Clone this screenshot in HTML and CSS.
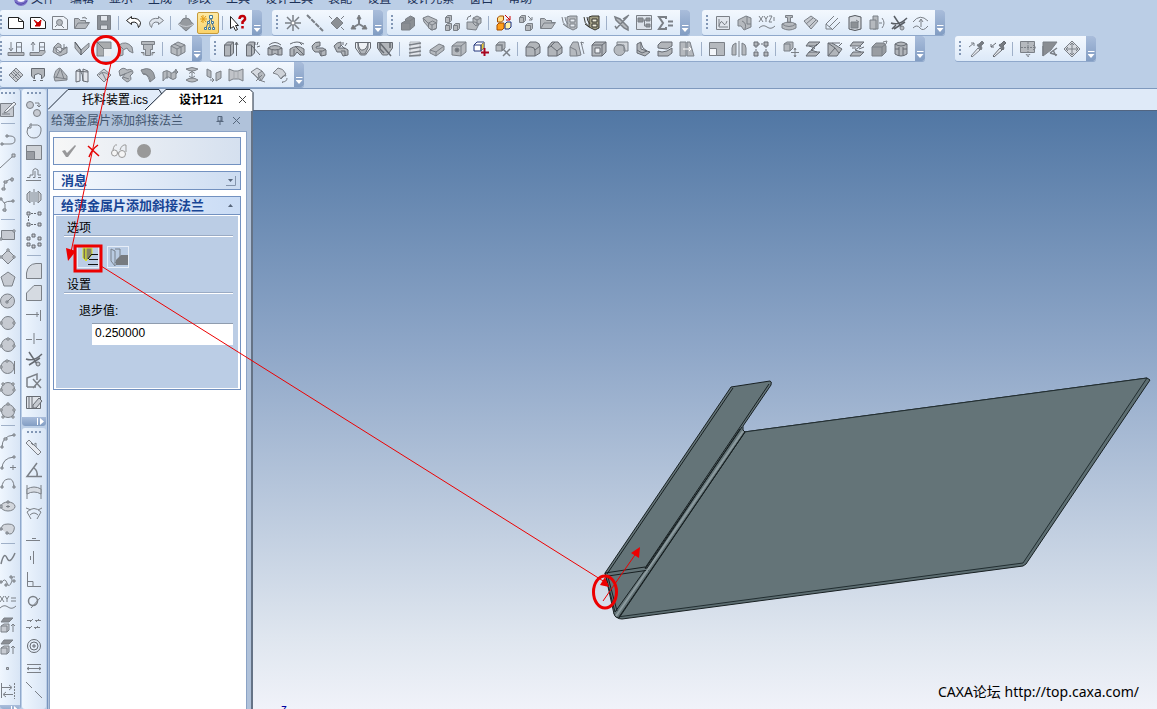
FILE: index.html
```html
<!DOCTYPE html>
<html lang="zh-CN">
<head>
<meta charset="utf-8">
<title>设计121</title>
<link rel="stylesheet" href="styles.css">
</head>
<body>
<header class="top">
<nav class="menu" aria-label="菜单">
<svg class="logo" viewBox="0 0 16 16"><circle cx="8" cy="8" r="7" fill="#7c74c8"/><ellipse cx="8" cy="8" rx="4" ry="3" fill="#f4f2ff"/><path d="M2 11q6 5 12-1" stroke="#5548ac" fill="none"/></svg>
<button>文件</button><button>编辑</button><button>显示</button><button>生成</button><button>修改</button><button>工具</button><button>设计工具</button><button>装配</button><button>设置</button><button>设计元素</button><button>窗口</button><button>帮助</button>
</nav>

<div class="row">
<div class="bar flush" role="toolbar" aria-label="标准">
<button class="tool dark" aria-label="新建"><svg viewBox="0 0 16 16"><path d="M.5 2.500h10l5 4v7H.5z" fill="#fff"/><path d="M10.500 2.500v4h5" fill="none"/></svg></button>
<button class="tool dark" aria-label="新建设计"><svg viewBox="0 0 16 16"><path d="M.5 2.500h10l5 4v7H.5z" fill="#fff"/><path d="M4 5l4 3 3-3-1 6H5l2-2z" fill="#c00" stroke="#c00"/></svg></button>
<button class="tool" aria-label="新建图纸"><svg viewBox="0 0 16 16"><path d="M.5 1.500h11l4 3v10H.5z" fill="#eef3f9"/><circle cx="7.500" cy="7.500" r="3"/><path d="M3 12l2-2M9 10l3 3"/></svg></button>
<button class="tool" aria-label="打开"><svg viewBox="0 0 16 16"><path d="M.5 13.500v-10h4l2 2h5v2h4l-4 6z"/><path d="M1 13l3-5h11M8 3q3-2 5 1"/></svg></button>
<button class="tool" aria-label="保存"><svg viewBox="0 0 16 16"><path d="M1.500.5h13v14h-13z" fill="#8b9097"/><path d="M4.500 1v5h7V1" fill="#e5e9ef"/><path d="M4.500 14v-4h7v4" fill="#d9dde3"/></svg></button>
<i class="sep"></i>
<button class="tool dark" aria-label="撤销"><svg viewBox="0 0 16 16"><path d="M5.500 1.500l-5 4 5 4v-2q6-2 7 5 2-2 2-5-2-5-9-4z" fill="#fff"/></svg></button>
<button class="tool" aria-label="重做"><svg viewBox="0 0 16 16"><path d="M10.500 1.500l5 4-5 4v-2q-6-2-7 5-2-2-2-5 2-5 9-4z" fill="#dfe5ed"/></svg></button>
<i class="sep"></i>
<button class="tool" aria-label="渲染"><svg viewBox="0 0 16 16"><path d="M8 0v3q4 0 5 4l2.500 2-3 3-4.500 4-4.500-4-3-3L3 7q1-4 5-4" fill="#969a9f"/><path d="M.5 9q8 5 15 0" fill="none" stroke="#c8ccd2"/></svg></button>
<button class="tool active" aria-label="设计树"><svg viewBox="0 0 16 16"><path d="M3 0v8M0 4h7M1 1l5 6M6 1L1 7" stroke="#e39b13"/><path d="M11 3L8 8l-2 5M11 3l1 5 2 5M10 9v4" stroke="#557087" fill="none"/><path d="M9.500.5h3v3h-3zM7.500 6.500h2v2h-2zM11.500 6.500h2v2h-2zM4.500 12.500h2v2h-2zM8.500 12.500h2v2h-2zM12.500 12.500h2v2h-2z" fill="#e9fdff" stroke="#44799b"/></svg></button>
<i class="sep"></i>
<button class="tool dark" aria-label="帮助指针"><svg viewBox="0 0 16 16"><path d="M.5 1.500v12l3-2 2 4 2-1-2-4h3z" fill="#fff"/><path d="M9.500 4q0-3 3-3t2.500 3.500L12.500 7v2M12.500 11v2.500" fill="none" stroke="#c00009" stroke-width="2.500"/></svg></button>
<button class="cap" aria-label="工具栏选项"></button>
</div>
<div class="bar gap-10" role="toolbar" aria-label="基准">
<button class="tool" aria-label="点"><svg viewBox="0 0 16 16"><path d="M8 0v16M0 8h16M2 2l12 12M14 2L2 14" fill="none" stroke-width="1.500"/><circle cx="8" cy="8" r="2" fill="#fff"/></svg></button>
<button class="tool" aria-label="基准轴"><svg viewBox="0 0 16 16"><path d="M0 0l16 16" stroke-dasharray="5 1" stroke-width="2"/></svg></button>
<button class="tool" aria-label="基准面"><svg viewBox="0 0 16 16"><path d="M8 2l6 6-6 6-6-6z" fill="#8b8f94"/><path d="M0 1l3 3M12 4l3-3M12 12l3 3"/></svg></button>
<button class="tool" aria-label="坐标系"><svg viewBox="0 0 16 16"><path d="M8 2v7l-5 3M8 9l5 3" fill="none" stroke-width="2"/><path d="M6 4l2-4 2 4zM0 14l2-4 3 4zM16 14l-2-4-3 4z" fill="#777"/></svg></button>
<button class="cap" aria-label="工具栏选项"></button>
</div>
<div class="bar gap-4" role="toolbar" aria-label="装配">
<button class="tool" aria-label="零件"><svg viewBox="0 0 16 16"><path d="M1.500 8l4-2V4l5-3 4 2v8l-5 4h-8z" fill="#8b8f94"/><path d="M5 6h5l4-3M2 8h8v7" fill="none"/></svg></button>
<button class="tool" aria-label="组件"><svg viewBox="0 0 16 16"><path d="M1 3l5-2 9 4-1 9-5 1-7-8z"/><path d="M6.500 8l4-2 4 2v5l-4 2-4-2zM6 8l4 2 4-2M10 10v5M1 3l5 5"/></svg></button>
<button class="tool" aria-label="装配体"><svg viewBox="0 0 16 16"><path d="M1.500 2.500l2-2h4v5l-2 2h-4zM1.500 10.500l2-2h4v5l-2 2h-4zM9.500 10.500l2-2h4v5l-2 2h-4z"/><path d="M1.500 2.500h4v5M1.500 10.500h4v5M9.500 10.500h4v5" fill="none"/></svg></button>
<button class="tool" aria-label="插入零件"><svg viewBox="0 0 16 16"><path d="M1 14V7h8l4 2-3 6zM7 3l4-2 4 2v5l-5 3-3-3z"/><path d="M1 5q0-4 4-4L4 0M7 3l4 2 4-2M11 5v5" fill="none"/></svg></button>
<i class="sep"></i>
<button class="tool" aria-label="装配列表"><svg viewBox="0 0 16 16"><path d="M1.500 3l2-2h4v4l-2 2h-4z" fill="#ffe087" stroke="#a34c00"/><path d="M1 10l2-2h5v5l-2 2H1z" fill="#ff9e1b" stroke="#a34c00"/><path d="M9 9l2-2h4v5l-2 2H9z" fill="#fff0a6" stroke="#122b83"/><path d="M9 0l5 5M14 1v4h-4" fill="none" stroke="#c00"/></svg></button>
<button class="tool" aria-label="解除装配"><svg viewBox="0 0 16 16"><path d="M1.500 2.500l2-2h4v5l-2 2h-4zM7.500 10.500l2-2h5v5l-2 2h-5z"/><path d="M1.500 2.500h4v5M7.500 10.500h5v5M10 1l4 4M14 2v3h-3" fill="none"/></svg></button>
<button class="tool" aria-label="导入"><svg viewBox="0 0 16 16"><path d="M.5 13.500v-10h4l2 2h5v2h4l-4 6z"/><path d="M1 13l3-5h11"/></svg></button>
<button class="tool" aria-label="链接"><svg viewBox="0 0 16 16"><path d="M5 2l3-1h7v12l-4 2-6-3z"/><path d="M8 4h5v3H8zM8 9h5v3H8z" fill="#e8ecf2"/><path d="M0 2q0 6 5 10L1 9M3 2q0 4 3 7" fill="none"/></svg></button>
<button class="tool olive" aria-label="保存链接"><svg viewBox="0 0 16 16"><path d="M5 2l3-1h7v12l-4 2-6-3z"/><path d="M8 4h5v3H8zM8 9h5v3H8z" fill="#f0eedc"/><path d="M0 2q0 6 5 10L1 9M3 2q0 4 3 7" fill="none"/></svg></button>
<i class="sep"></i>
<button class="tool" aria-label="约束"><svg viewBox="0 0 16 16"><path d="M1 2l5 2 8 8v3l-4-2-8-8zM14 1L2 14M9 4l6-4M3 14l-2-3" stroke-width="1.500"/></svg></button>
<button class="tool" aria-label="设计关系"><svg viewBox="0 0 16 16"><path d="M.5.5h15v14H.5z" fill="#dce2ea"/><path d="M2 3h5v4H2zM10 3h4v3h-4zM10 9h4v3h-4z" fill="#8c9095"/><path d="M7 5h3M8.500 5v6H10" fill="none"/></svg></button>
<button class="tool" aria-label="统计"><svg viewBox="0 0 16 16"><path d="M8 4V2H1l4 6-4 6h7v-2M10 6.500h5M10 10.500h5" fill="none" stroke-width="2"/></svg></button>
<button class="cap" aria-label="工具栏选项"></button>
</div>
<div class="bar gap-12" role="toolbar" aria-label="曲面">
<button class="tool" aria-label="草图曲线"><svg viewBox="0 0 16 16"><path d="M1.500 1.500h13v13h-13z" fill="#e2e7ee"/><path d="M4 4v8h9M4 11q2-7 4-3t4-2" fill="none"/></svg></button>
<button class="tool" aria-label="投影曲线"><svg viewBox="0 0 16 16"><path d="M1 5l8-4 5 2v9l-7 3-3-4H1z"/><path d="M5 6q5 2 3 8M10 1v8h4" fill="none"/></svg></button>
<button class="tool" aria-label="公式曲线"><svg viewBox="0 0 16 16"><path d="M0 1l4 6M4 1L0 7M5 1l2 3 2-3M7 4v3M10 1h3l-3 6h3M14 3h2M14 5h2M0 13q4-4 8-1t8-1" fill="none"/></svg></button>
<button class="tool" aria-label="放样"><svg viewBox="0 0 16 16"><path d="M4.500.5h7v2h-2v5h-3v-5h-2zM1 9q7-4 14 0v4q-7 4-14 0z"/><path d="M1 9q7 5 14 0" fill="none"/></svg></button>
<button class="tool" aria-label="曲面"><svg viewBox="0 0 16 16"><path d="M1 6l7-5 7 5-7 8z" fill="#c6cad0"/><path d="M3 9l7-6M6 12l7-7" fill="none"/></svg></button>
<button class="tool" aria-label="等距"><svg viewBox="0 0 16 16"><path d="M1 14V9l8-8M4 12l9-9M7 15l8-8M1 14h6M1 9l6 5" fill="none"/></svg></button>
<button class="tool" aria-label="圆柱面"><svg viewBox="0 0 16 16"><path d="M2 2q6-3 12 0v12q-6 3-12 0z" fill="#d2d6dc" stroke="#55595f"/><path d="M4 7h7v6H4z" fill="#8c9095"/><path d="M9 5l3 2" fill="none"/></svg></button>
<button class="tool" aria-label="延伸"><svg viewBox="0 0 16 16"><path d="M4 1h5v13H4z"/><path d="M1 5h6v9H1z"/><path d="M10 8h3M13 3q4 5 0 10" fill="none"/></svg></button>
<button class="tool" aria-label="裁剪"><svg viewBox="0 0 16 16"><path d="M3 1l8 12M0 8q8 3 16-5M3 14L14 7M5 10l-4 4" fill="none" stroke="#585d64" stroke-width="1.500"/><circle cx="11" cy="13" r="2"/></svg></button>
<button class="tool" aria-label="提升曲线"><svg viewBox="0 0 16 16"><path d="M0 7q7-9 15-1M0 13q4-4 7 0t8-2M8 12V5M6 7l2-3 2 3" fill="none"/></svg></button>
<button class="cap" aria-label="工具栏选项"></button>
</div>
</div>

<div class="row">
<div class="bar flush" role="toolbar" aria-label="钣金">
<button class="tool" aria-label="向下折弯"><svg viewBox="0 0 16 16"><path d="M3 1v8M1 7l2 3 2-3M8.500 11V1.500h5V11M8.500 6h5" fill="none"/><path d="M0 11.500h16v3H0z"/></svg></button>
<button class="tool" aria-label="向上折弯"><svg viewBox="0 0 16 16"><path d="M3 10V1M1 4l2-3 2 3M9.500 11V1.500h5V11M9.500 6h5" fill="none"/><path d="M0 11.500h9l1-2h5v2l-3 3H0z"/></svg></button>
<button class="tool" aria-label="板料"><svg viewBox="0 0 16 16"><path d="M2 6l4-4 3 2v4l6-2v6l-7 3-7-4z"/><circle cx="7" cy="9" r="3" fill="#e0e4eb"/><path d="M2 6l6 5 7-5M12 3v5" fill="none"/></svg></button>
<button class="tool" aria-label="折弯板"><svg viewBox="0 0 16 16"><path d="M1 1v6l6 7 8-8V2L7 9z"/><path d="M7 9v5M1 1l6 8" fill="none" stroke="#4f545a"/></svg></button>
<button class="tool" aria-label="斜接法兰"><svg viewBox="0 0 16 16"><path d="M1 1h14v7H8v7H1z" fill="#a9acae"/><path d="M1 1l7 7" stroke="#6d7479"/><path d="M8 8h7v7H8z" fill="#edf0f4" stroke="none"/></svg></button>
<button class="tool" aria-label="弯边"><svg viewBox="0 0 16 16"><path d="M1 4q7-5 13 2l1 6-4-2-2-3-4 2v5l-3 1z"/><path d="M5 8q-3-3-4-4" fill="none"/></svg></button>
<button class="tool" aria-label="冲压"><svg viewBox="0 0 16 16"><path d="M1.500.5h13v3h-13z"/><path d="M3.500 3.500h9v5h-2v6h-5v-6h-2zM1 11.500h3v3M15 11.500h-3v3"/></svg></button>
<i class="sep"></i>
<button class="tool" aria-label="钣金零件"><svg viewBox="0 0 16 16"><path d="M1 5l7-4 7 3v7l-7 4-7-3z"/><path d="M1 5l6 3 8-4M7 8v7M4 3l7 3v7" fill="none"/></svg></button>
<button class="cap" aria-label="工具栏选项"></button>
</div>
<div class="bar gap-8" role="toolbar" aria-label="特征">
<button class="tool deep" aria-label="拉伸"><svg viewBox="0 0 16 16"><path d="M1.500 4l3-3h6v11l-3 3h-6z"/><path d="M1.500 4h6v11M7.500 4l3-3M13.500 15V2M12 4l1.500-3L15 4" fill="none"/></svg></button>
<button class="tool deep" aria-label="拉伸向导"><svg viewBox="0 0 16 16"><path d="M1.500 4l3-3h5v11l-3 3h-5z"/><path d="M1.500 4h5v11M7 5l8 9M10 1v3M13 1l-1 3M15 5l-3 1" fill="none"/></svg></button>
<button class="tool deep" aria-label="旋转"><svg viewBox="0 0 16 16"><path d="M1 7q7-5 14 0v7h-4q-3-3-6 0H1z"/><path d="M1 7q7 4 14 0M5 9v5M11 9v5M2 4q6-5 12 0" fill="none"/></svg></button>
<button class="tool deep" aria-label="旋转向导"><svg viewBox="0 0 16 16"><path d="M1 8q7-5 14 0v6h-4l-3-3-3 4H1z"/><path d="M1 3q7-4 14 0M6 5l9 9M5 8v6M10 1l3 3" fill="none"/></svg></button>
<button class="tool deep" aria-label="扫描"><svg viewBox="0 0 16 16"><path d="M1 5q3-5 8-4v4q-5 0-4 2h7l3 2v5l-5 1-2-4H4q-3-2-3-6z"/><path d="M8 10h4l3-2M10 10v5" fill="none"/></svg></button>
<button class="tool deep" aria-label="扫描向导"><svg viewBox="0 0 16 16"><path d="M1 5q3-4 7-4v4L5 7h7l3 2v5l-5 1-2-4H4z"/><path d="M8 4l4 4M10 1v3M14 2l-2 3M8 10h4v5" fill="none"/></svg></button>
<button class="tool deep" aria-label="放样特征"><svg viewBox="0 0 16 16"><path d="M.5 1.500h15V7l-5 7h-5L.5 7z" fill="#eef1f5"/><path d="M3 2q1 8 5 7t5-7v5l-3 6H6L3 7z"/></svg></button>
<button class="tool deep" aria-label="放样向导"><svg viewBox="0 0 16 16"><path d="M.5 1.500h15V7l-5 7h-5L.5 7z"/><path d="M3 2l11 13M3 2v6l4 4M13 2v5" fill="none" stroke-width="1.500"/></svg></button>
<i class="sep"></i>
<button class="tool" aria-label="螺纹"><svg viewBox="0 0 16 16"><path d="M3 1h10v14H3z" fill="#e3e6eb" stroke="#b0b5bc"/><path d="M2 4l12-2M2 8l12-2M2 12l12-2M2 15l12-1" stroke-width="1.500"/></svg></button>
<button class="tool" aria-label="加厚"><svg viewBox="0 0 16 16"><path d="M1 9l9-6 5 2v4l-8 6-6-3z"/><path d="M1 9l6 2 8-6M7 11v4" fill="none"/></svg></button>
<button class="tool" aria-label="自定义孔"><svg viewBox="0 0 16 16"><path d="M1 5l5-4h9v10l-5 4-9-1z"/><path d="M1 5h9v10M10 5l5-4" fill="none"/><circle cx="6" cy="9" r="2" fill="#6f747a"/></svg></button>
<button class="tool" aria-label="添加"><svg viewBox="0 0 16 16"><path d="M1 4l3-3h7v6l-3 3H1z" fill="#fff" stroke="#25377c"/><path d="M8 4l3-3v6L8 10z" fill="#e9c736"/><path d="M1 4h7v6" fill="none" stroke="#25377c"/><path d="M11.500 7v8M8 11.500h8" stroke="#a80620" stroke-width="2"/></svg></button>
<button class="tool" aria-label="删除体"><svg viewBox="0 0 16 16"><path d="M1 4l3-3h6v6l-3 3H1z"/><path d="M1 4h6v6M8 8l7 7M15 8l-7 7" fill="none" stroke-width="1.500"/></svg></button>
<i class="sep"></i>
<button class="tool deep" aria-label="圆角"><svg viewBox="0 0 16 16"><path d="M1 6l4-5h6q4 1 4 5v6l-5 3H1z"/><path d="M1 6h5q4 0 4 4v5M10 9l5-4" fill="none"/></svg></button>
<button class="tool deep" aria-label="倒角"><svg viewBox="0 0 16 16"><path d="M1 6l4-5h6l4 5v6l-5 3H1z"/><path d="M1 7l3-2 6 5v5M4 5l4-4M10 10l5-4" fill="none"/></svg></button>
<button class="tool" aria-label="拔模"><svg viewBox="0 0 16 16"><path d="M1 6l3-5h5l3 13-4 1H1z"/><path d="M1 6l6 3 1 6M12 1l3 12M13 4l-1-3 3 1" fill="none"/></svg></button>
<button class="tool deep" aria-label="抽壳"><svg viewBox="0 0 16 16"><path d="M1 4l3-3h11v10l-4 4H1z"/><path d="M1 4h10v11M11 4l4-3" fill="none"/><path d="M4 7h5v5H4z" fill="#eef1f5"/></svg></button>
<button class="tool" aria-label="布尔"><svg viewBox="0 0 16 16"><path d="M4 1h11v9H4z" fill="#d0d4d9"/><circle cx="6.500" cy="9" r="5.500"/><path d="M4 4h7v6" fill="none"/></svg></button>
<button class="tool deep" aria-label="筋板"><svg viewBox="0 0 16 16"><path d="M2 3l4-2v7l9 3-5 4-8-3z"/><path d="M6 2q1 6 6 8l-5 2-5-3" fill="none"/></svg></button>
<button class="tool deep" aria-label="分割"><svg viewBox="0 0 16 16"><path d="M1 4l3-3h11v4l-5 3-9-1zM1 10l4 1 5-1 5-3v5l-4 3H1z"/></svg></button>
<button class="tool" aria-label="截面"><svg viewBox="0 0 16 16"><path d="M1 1h6v14H1zM8 1h3l4 14H8z"/><path d="M4 8h8M10 6l2 2-2 2" fill="none" stroke="#fff"/></svg></button>
<i class="sep"></i>
<button class="tool" aria-label="缩放"><svg viewBox="0 0 16 16"><path d="M.5 1.500h15v13H.5z"/><path d="M.5 7.500h7v7h-7z" fill="#f3f6fa"/></svg></button>
<button class="tool" aria-label="镜像"><svg viewBox="0 0 16 16"><path d="M1 7q0-4 4-5v12H1zM15 7q0-4-4-5v12h4z"/><path d="M8 0v16"/></svg></button>
<button class="tool deep" aria-label="阵列"><svg viewBox="0 0 16 16"><path d="M1 1h4v4H1zM11 1h4v4h-4zM1 11h4v4H1zM11 11h4v4h-4z"/><path d="M5 3h6M3 5v6M13 5v6" stroke-dasharray="2 1" fill="none"/></svg></button>
<i class="sep"></i>
<button class="tool" aria-label="移动面"><svg viewBox="0 0 16 16"><path d="M1 3l3-2h6v6l-3 3H1z"/><path d="M1 3h6v7M12 7v9M8 11.500h8M11 9l1-2 1 2M11 14l1 2 1-2" fill="none"/></svg></button>
<button class="tool deep" aria-label="匹配面"><svg viewBox="0 0 16 16"><path d="M4 1h11l-4 4H1zM4 11h11l-4 4H1z"/><path d="M4 5l6 2-6 4M12 3L6 9l6 2" fill="none"/></svg></button>
<button class="tool deep" aria-label="偏移面"><svg viewBox="0 0 16 16"><path d="M1 2h4l10 6-5 7H1z"/><path d="M1 2l7 5-7 8M5 2h8M8 7l4 5M12 5l3-3" fill="none"/></svg></button>
<button class="tool deep" aria-label="替换面"><svg viewBox="0 0 16 16"><path d="M4 1h11l-4 4H1zM4 11h11l-4 4H1z"/><path d="M12 5L6 9l6 2M3 7h4M10 8l5-2" fill="none"/></svg></button>
<button class="tool" aria-label="编辑面"><svg viewBox="0 0 16 16"><path d="M1 6l4-4h8l2 3v6l-4 4H1z" fill="#999da2"/><path d="M1 6h10v9M11 6l4-3M12 1l4-1-1 3" fill="none"/></svg></button>
<button class="tool deep" aria-label="柱面"><svg viewBox="0 0 16 16"><path d="M2 3q6-4 12 0v10q-6 4-12 0z"/><path d="M2 3q6 4 12 0M6 6v9M10 6v8M2 8h4M10 8h4" fill="none"/></svg></button>
<button class="cap" aria-label="工具栏选项"></button>
</div>
<div class="bar gap-30" role="toolbar" aria-label="拾取">
<button class="tool" aria-label="提取属性"><svg viewBox="0 0 16 16"><path d="M3 15l7-8 2 2-8 7z" fill="#e4e8ee"/><path d="M9 4l4 5 1-2-1-2 3-3-2-2-3 3z" fill="#777c82"/><path d="M1 6l5-4M3 2h3v3" fill="none"/></svg></button>
<button class="tool deep" aria-label="应用属性"><svg viewBox="0 0 16 16"><path d="M3 15l7-8 2 2-8 7z" fill="#e4e8ee"/><path d="M9 4l4 5 1-2-1-2 3-3-2-2-3 3z" fill="#777c82"/><path d="M6 2L1 6M1 3v3h3" fill="none"/></svg></button>
<i class="sep"></i>
<button class="tool" aria-label="移动贴图"><svg viewBox="0 0 16 16"><path d="M.5.500h14v11H.5z"/><path d="M8 1v14M1 6.500h14M6 13l2 3 2-3M13 4l3 2.500-3 2.500" fill="none" stroke-dasharray="2 1"/></svg></button>
<button class="tool" aria-label="移动凸痕"><svg viewBox="0 0 16 16"><path d="M1 1h14L9 9l-8 6z" fill="#898d92"/><path d="M1 15V5M8 12l7-5M11 9l3 6M8 12l7 2" fill="none" stroke-width="1.500"/></svg></button>
<button class="tool" aria-label="移动纹理"><svg viewBox="0 0 16 16"><path d="M8 0l8 8-8 8-8-8z" fill="#d6dae0"/><path d="M8 2v12M2 8h12M6 4l2-2 2 2M6 12l2 2 2-2M4 6L2 8l2 2M12 6l2 2-2 2" fill="none"/></svg></button>
<button class="cap" aria-label="工具栏选项"></button>
</div>
</div>

<div class="row">
<div class="bar flush" role="toolbar" aria-label="曲面编辑">
<button class="tool" aria-label="网格面"><svg viewBox="0 0 16 16"><path d="M8 1l7 7-7 7-7-7z" fill="#c6cad0"/><path d="M4 4l8 8M6 3l7 7M3 6l7 7M12 4l-8 8" fill="none"/></svg></button>
<button class="tool deep" aria-label="放样面"><svg viewBox="0 0 16 16"><path d="M1.500 1.500h13V9l-3 3V8q-3-3-7 0v4l-3-3z"/><path d="M3 13.500h3M10 13.500h3" fill="none"/></svg></button>
<button class="tool" aria-label="直纹面"><svg viewBox="0 0 16 16"><path d="M2 10q1-8 6-9l7 8v4l-12 1z"/><path d="M2 10l13 2M8 2L4 11M9 3l3 9" fill="none"/></svg></button>
<button class="tool deep" aria-label="拉伸面"><svg viewBox="0 0 16 16"><path d="M2 4l4-2v12l-4 1zM9 2l5 2v11l-5-1z" fill="#e3e7ed"/><path d="M6 3q3 4 3 11M2 4l12 1" fill="none"/></svg></button>
<button class="tool" aria-label="旋转面"><svg viewBox="0 0 16 16"><path d="M1 8l7-6 7 6-7 7z" fill="#ced2d8"/><path d="M3 8q4-5 10 0M6 5l4 8" fill="none"/></svg></button>
<button class="tool" aria-label="导动面"><svg viewBox="0 0 16 16"><path d="M1 4q4-5 8-1 6-2 6 3l-3 3q3 4-3 6l-5-4 3-4-5 2z"/><path d="M2 9q9-4 12-5M5 10l6 2" fill="none"/></svg></button>
<button class="tool" aria-label="弯曲面"><svg viewBox="0 0 16 16"><path d="M1 3q12-5 14 8l-5 4q1-7-7-8z" fill="#9b9fa4"/><path d="M3 7q4-2 7 8" fill="none"/></svg></button>
<button class="tool" aria-label="延伸面"><svg viewBox="0 0 16 16"><path d="M1 5q4-3 7 0t6-3v9q-3 3-6 0t-7 3z"/><path d="M5 4v8M9 6v6M11 5h5M14 3l2 2-2 2" fill="none"/></svg></button>
<button class="tool" aria-label="偏移曲面"><svg viewBox="0 0 16 16"><path d="M2 2q6-3 12 0-6 4-12 0M2 13q6-4 12 0-6 4-12 0"/><path d="M8 4v7M5 6.500l3-2 3 2M5 9l3 2 3-2" fill="none"/></svg></button>
<button class="tool" aria-label="复制面"><svg viewBox="0 0 16 16"><path d="M1 2l4 2v7l-4-2zM10 6l5-2v7l-5 3z"/><path d="M4 13h4M6 11l2 2-2 2" fill="none"/></svg></button>
<button class="tool" aria-label="缝合面"><svg viewBox="0 0 16 16"><path d="M1 2l5 2h4l5-2v12l-4-2H5l-4 2z" fill="#c1c4c9"/><path d="M6 4v8M10 4v8" fill="none" stroke="#a5a9ae"/></svg></button>
<button class="tool" aria-label="裁剪面"><svg viewBox="0 0 16 16"><path d="M1 5l6-4 5 3-4 7z" fill="#d6dae0"/><path d="M8 7l4-3 3 4-4 6z"/><path d="M3 6l7 8M12 8l-6 6M9 13l6 2" fill="none"/></svg></button>
<button class="tool" aria-label="还原面"><svg viewBox="0 0 16 16"><path d="M1 6l5-5q5 0 8 6l-5 5Q6 6 1 6z" fill="#ced2d8"/><path d="M9 12q1-4 5-3l-1-2M15 11q0 4-5 4l1 1" fill="none"/></svg></button>
<button class="cap" aria-label="工具栏选项"></button>
</div>
</div>
</header>

<main class="work">
<div class="side first" role="toolbar" aria-label="草图绘制">
<button class="tool" aria-label="草图"><svg viewBox="0 0 16 16"><path d="M.5 2.500h13v13H.5z"/><path d="M5 10l9-9 2 2-9 8-3 1zM2 13h8" fill="#eef2f7"/></svg></button>
<i class="sep"></i>
<button class="tool" aria-label="连续直线"><svg viewBox="0 0 16 16"><path d="M2 13h8q5 0 5-4t-5-4H8" fill="none"/><path d="M1 12h2v2H1zM6 4h2v2H6z"/></svg></button>
<button class="tool" aria-label="两点线"><svg viewBox="0 0 16 16"><path d="M0 15L13 3"/><path d="M12 1h3v3h-3z"/></svg></button>
<button class="tool" aria-label="切线弧"><svg viewBox="0 0 16 16"><path d="M4 14Q3 4 14 4" fill="none"/><path d="M2 13h3v2H2zM4 6h3v2H4zM11 3h2v3h-2z"/></svg></button>
<button class="tool" aria-label="法线弧"><svg viewBox="0 0 16 16"><path d="M1 2l4 5q0 6 0 8M4 6q2-2 10-2" fill="none"/><path d="M0 1h2v2H0zM3 12h3v2H3zM12 3h2v2h-2z"/></svg></button>
<i class="sep"></i>
<button class="tool" aria-label="矩形"><svg viewBox="0 0 16 16"><path d="M1.500 3.500h13v9h-13z"/><path d="M0 11h2v2H0zM13 3h2v2h-2z" fill="#eef2f7"/></svg></button>
<button class="tool" aria-label="三点矩形"><svg viewBox="0 0 16 16"><path d="M8 1l7 7-7 7-7-7z"/><path d="M7 0h2v2H7zM0 7h2v2H0zM13 7h2v2h-2z" fill="#eef2f7"/></svg></button>
<button class="tool" aria-label="多边形"><svg viewBox="0 0 16 16"><path d="M8 1l7 5-3 9H4L1 6z"/></svg></button>
<button class="tool" aria-label="圆心半径"><svg viewBox="0 0 16 16"><circle cx="7.500" cy="8" r="7"/><path d="M7 9l5-5M6 8h2v2H6z"/></svg></button>
<button class="tool" aria-label="两点圆"><svg viewBox="0 0 16 16"><circle cx="8" cy="8" r="6.500"/><path d="M0 7h2v2H0zM13 7h2v2h-2z" fill="#eee"/></svg></button>
<button class="tool" aria-label="三点圆"><svg viewBox="0 0 16 16"><circle cx="8" cy="8" r="6.500"/><path d="M7 1h2v2H7zM0 8h2v2H0zM13 8h2v2h-2z" fill="#eee"/></svg></button>
<button class="tool" aria-label="切点圆"><svg viewBox="0 0 16 16"><circle cx="7.500" cy="8" r="6.500"/><path d="M14.500 2v13M6 1h2v2H6zM0 7h2v2H0z" fill="#eee"/></svg></button>
<button class="tool" aria-label="双切圆"><svg viewBox="0 0 16 16"><circle cx="8" cy="8" r="6.500"/><path d="M2 2h2v2H2zM12 2h2v2h-2zM0 8h2v2H0zM13 8h2v2h-2z" fill="#eee"/></svg></button>
<button class="tool" aria-label="三切圆"><svg viewBox="0 0 16 16"><circle cx="8" cy="8" r="6.500"/><path d="M7 0h2v2H7zM2 13h2v2H2zM12 13h2v2h-2zM0 6h2v2H0zM13 6h2v2h-2z" fill="#eee"/></svg></button>
<i class="sep"></i>
<button class="tool" aria-label="圆弧"><svg viewBox="0 0 16 16"><path d="M2 14Q2 3 14 2" fill="none"/><path d="M1 13h2v2H1zM4 5h3v2H4zM13 1h2v2h-2z"/></svg></button>
<button class="tool" aria-label="圆心圆弧"><svg viewBox="0 0 16 16"><path d="M2 14Q2 3 14 2M13 10v5M10 12.500h6" fill="none"/><path d="M1 12h2v2H1zM13 1h2v2h-2z"/></svg></button>
<button class="tool" aria-label="端点圆弧"><svg viewBox="0 0 16 16"><path d="M2 11Q2 3 8 2t6 9" fill="none"/><path d="M1 9h2v2H1zM13 9h2v2h-2z"/></svg></button>
<button class="tool" aria-label="椭圆"><svg viewBox="0 0 16 16"><ellipse cx="8" cy="7.500" rx="7" ry="4.500" fill="#d2d6dc"/><path d="M8 6v3M6 7.500h4M0 6h2v3H0zM7 2h2v2H7z"/></svg></button>
<button class="tool" aria-label="椭圆弧"><svg viewBox="0 0 16 16"><path d="M2 9Q0 3 8 3t6 6-7 3" fill="#d2d6dc"/><path d="M0 7h2v2H0zM6 11h2v2H6z"/></svg></button>
<i class="sep"></i>
<button class="tool" aria-label="样条"><svg viewBox="0 0 16 16"><path d="M1 13Q4 0 7 7t8-5" fill="none" stroke-width="1.500"/></svg></button>
<button class="tool" aria-label="贝塞尔"><svg viewBox="0 0 16 16"><path d="M1 10q4-6 6 0t5-2q-1-5 3-4" fill="none"/><path d="M0 8h2v2H0zM5 11h2v2H5zM10 3h2v2h-2zM13 7h2v2h-2z"/></svg></button>
<button class="tool" aria-label="方程曲线"><svg viewBox="0 0 16 16"><path d="M0 1l4 6M4 1L0 7M5 1l2 3 2-3M7 4v3M11 3h5M11 6h5M0 13q4-4 8-1t8-1" fill="none"/></svg></button>
<button class="tool" aria-label="投影"><svg viewBox="0 0 16 16"><path d="M4 1h9l-4 4H1z" fill="#8b8f95"/><path d="M1 9l3-2h5v6l-2 2H1z"/><path d="M1 9h6v6M13 15V7M11 9l2-2 2 2" fill="none"/></svg></button>
<button class="tool" aria-label="投影约束"><svg viewBox="0 0 16 16"><path d="M4 1h9l-4 4H1z" fill="#8b8f95"/><path d="M1 9l3-2h5v6l-2 2H1z"/><path d="M1 9h6v6M13 15V7M11 9l2-2 2 2" fill="none"/></svg></button>
<button class="tool" aria-label="点工具"><svg viewBox="0 0 16 16"><path d="M6.500 6.500h2v2h-2z"/></svg></button>
<button class="tool" aria-label="宽度"><svg viewBox="0 0 16 16"><path d="M1.500 0v15M2 4.500h9M9 2l3 2.500L9 7M13 11.500H4M6 9l-3 2.500L6 14" fill="none"/><path d="M14.500 0v16" stroke-dasharray="2 1"/></svg></button>
<button class="cap" aria-label="工具栏选项"></button>
</div>
<div class="side-pair">
<div class="side" role="toolbar" aria-label="草图编辑">
<button class="tool" aria-label="移动"><svg viewBox="0 0 16 16"><circle cx="4" cy="4" r="3.500"/><circle cx="11" cy="12" r="3.500"/><path d="M9 2h4v3M11 4l2 2 2-2" fill="none"/></svg></button>
<button class="tool" aria-label="旋转草图"><svg viewBox="0 0 16 16"><path d="M4 3Q1 5 1 9q1 6 7 6t7-7-7-6H3M5 0v5H1" fill="none"/></svg></button>
<button class="tool" aria-label="缩放草图"><svg viewBox="0 0 16 16"><path d="M.5.5h15v14H.5z" fill="#cdd1d6"/><path d="M.5 6.500h8v8h-8z" fill="#999da3"/></svg></button>
<button class="tool" aria-label="等距线"><svg viewBox="0 0 16 16"><path d="M0 13.500h15M1 10.500h3V8h3V3q2-3 5 0v5M7 10.500h2V4M12 8h3M12 10.500h3" fill="none"/></svg></button>
<button class="tool" aria-label="镜像草图"><svg viewBox="0 0 16 16"><path d="M1 5l3-3v12l-3-3zM15 5l-3-3v12l3-3zM6 3v10M10 3v10M8 0v16"/></svg></button>
<button class="tool deep" aria-label="线性阵列"><svg viewBox="0 0 16 16"><path d="M1 1h3v3H1zM12 1h3v3h-3zM1 12h3v3H1zM12 12h3v3h-3z"/><path d="M5 2.500h6M2.500 5v6M5 13.500h6" stroke-dasharray="2 1" fill="none"/></svg></button>
<button class="tool deep" aria-label="圆形阵列"><svg viewBox="0 0 16 16"><path d="M6 1h3v3H6zM6 12h3v3H6zM1 4h3v3H1zM12 4h3v3h-3zM1 10h3v3H1zM12 10h3v3h-3z"/></svg></button>
<i class="sep"></i>
<button class="tool" aria-label="圆角过渡"><svg viewBox="0 0 16 16"><path d="M.5 15.500V10Q2 1 10 .5h5.500v15z" fill="#d5dae1"/></svg></button>
<button class="tool" aria-label="倒角过渡"><svg viewBox="0 0 16 16"><path d="M.5 15.500V8L8 .5h7.500v15z" fill="#d5dae1"/></svg></button>
<button class="tool" aria-label="延长"><svg viewBox="0 0 16 16"><path d="M0 7.500h13M11 5v5M14.500 3v11" fill="none"/></svg></button>
<button class="tool" aria-label="打断"><svg viewBox="0 0 16 16"><path d="M0 10.500h6M10 10.500h6M8 4v11" fill="none"/></svg></button>
<button class="tool deep" aria-label="裁剪线"><svg viewBox="0 0 16 16"><path d="M3 1l8 12M0 8q8 3 16-5M3 14L14 7" fill="none" stroke-width="1.500"/><circle cx="12" cy="13" r="2"/></svg></button>
<button class="tool" aria-label="删除线"><svg viewBox="0 0 16 16"><path d="M1 14V5l10-4v6M1 14h9M7 6l8 9M15 6l-8 9" fill="none" stroke-width="1.500"/></svg></button>
<button class="tool deep" aria-label="清理"><svg viewBox="0 0 16 16"><path d="M.5 1.500h14v12H.5z" fill="#dfe3e9"/><path d="M3 2v11M6 2v11"/><path d="M7 10l6-7 3 3-6 7H7z"/></svg></button>
<button class="cap" aria-label="工具栏选项"></button>
</div>
<div class="side grow" role="toolbar" aria-label="约束">
<button class="tool" aria-label="智能标注"><svg viewBox="0 0 16 16"><path d="M0 3l3-3 12 12-3 3z" fill="#e7ebf1"/><path d="M5 3l2 2 3-2v4l2 2" fill="none"/></svg></button>
<button class="tool" aria-label="角度"><svg viewBox="0 0 16 16"><path d="M11 1L1 14.500h15M8 6q4 3 3 8" fill="none" stroke-width="1.500"/></svg></button>
<button class="tool" aria-label="弧长"><svg viewBox="0 0 16 16"><path d="M1 1v14M15 1v14" /><path d="M1 5q7-4 14 0v5q-7-4-14 0z" fill="#d7dce3"/></svg></button>
<button class="tool" aria-label="弧角"><svg viewBox="0 0 16 16"><path d="M1 6q7-7 14 0l-4 7M1 6l4 7M4 9q4-4 8 0M0 2l5 2M16 2l-4 2" fill="none"/></svg></button>
<button class="tool" aria-label="水平"><svg viewBox="0 0 16 16"><path d="M6 10.500h4M0 12.500h14"/></svg></button>
<button class="tool" aria-label="铅垂"><svg viewBox="0 0 16 16"><path d="M7.500 1v13M4.500 6v4"/></svg></button>
<button class="tool" aria-label="垂直"><svg viewBox="0 0 16 16"><path d="M1.500 0v14.500H15M2 9.500h5v5" fill="none"/></svg></button>
<button class="tool" aria-label="相切"><svg viewBox="0 0 16 16"><circle cx="7" cy="7" r="4.500" fill="none" stroke-width="1.500"/><path d="M14 4L5 14" fill="none"/></svg></button>
<button class="tool" aria-label="平行"><svg viewBox="0 0 16 16"><path d="M1 4.500h5M9 4.500h6M0 11.500h5M8 11.500h6M4 6l3-3M10 6l3-3M3 13l3-3M9 13l3-3"/></svg></button>
<button class="tool deep" aria-label="同心"><svg viewBox="0 0 16 16"><circle cx="8" cy="8" r="6.500" fill="none"/><circle cx="8" cy="8" r="4" fill="none"/><path d="M8 6v4M6 8h4"/></svg></button>
<button class="tool" aria-label="等长"><svg viewBox="0 0 16 16"><path d="M1 4.500h14M1 8.500h14M1 12.500h14M3 7l-2 1.500L3 10M13 7l2 1.500-2 1.500" fill="none"/></svg></button>
<button class="tool" aria-label="共线"><svg viewBox="0 0 16 16"><path d="M0 0l6 6M9 9l7 7"/></svg></button>
</div>
</div>

<section class="docs">
<div class="tabs" role="tablist">
<svg class="tab-shape" viewBox="0 0 208 22"><path d="M0 20.500L20 .5h91l8 8V22H0z" fill="#e2ecf9"/><path d="M0 20.500L20 .5h91l3 5" fill="none" stroke="#1f2b3b"/><path d="M97 22L118 .5h84l3 3V22z" fill="#fff" stroke="none"/><path d="M97 21L118 .5h84l3 3V22" fill="none" stroke="#1f2b3b"/></svg>
<button class="tab one" role="tab">托料装置.ics</button><button class="tab two" role="tab" aria-selected="true">设计121</button><button class="x" aria-label="关闭文档"><svg viewBox="0 0 9 9"><path d="M1 1l7 7M8 1L1 8" stroke="#444"/></svg></button>
</div>
<div class="split">
<aside class="panel">
<div class="panel-title"><h2>给薄金属片添加斜接法兰</h2>
<button class="x" aria-label="固定"><svg viewBox="0 0 9 9"><path d="M3 .5h4V5H3zM1.500 5.500h7M5 6v3M6 1v4" fill="none" stroke="#56677d"/></svg></button>
<button class="x" aria-label="关闭"><svg viewBox="0 0 9 9"><path d="M1 1l7 7M8 1L1 8" stroke="#56677d"/></svg></button></div>
<div class="panel-body">
<div class="actions">
<button aria-label="确定"><svg viewBox="0 0 16 16"><path d="M1 8l3-1 2 3 8-8 1 1-8 11H5z" fill="#98989a"/></svg></button>
<button aria-label="取消"><svg viewBox="0 0 16 16"><path d="M2 3l11 10M12 2q-6 4-9 12" fill="none" stroke="#e20000" stroke-width="1.500"/></svg></button>
<button aria-label="预览"><svg viewBox="0 0 16 16"><g fill="#f5f5f5" stroke="#999"><circle cx="3.500" cy="10" r="3"/><circle cx="11" cy="11" r="3.500"/><path d="M2 7q1-6 4-5M9 7q2-6 6-5v7M6 10h2" fill="none"/></g></svg></button>
<button aria-label="应用"><svg viewBox="0 0 16 16"><circle cx="8" cy="8" r="7" fill="#999"/></svg></button>
</div>
<button class="message">消息<svg viewBox="0 0 10 10"><path d="M0 9.500h9.500V0" fill="none" stroke="#8495ad"/><path d="M2 3h5L4.500 6z" fill="#56657a"/></svg></button>
<section class="group">
<button class="group-head">给薄金属片添加斜接法兰<svg viewBox="0 0 10 10"><path d="M2 6h5L4.500 3z" fill="#56657a"/></svg></button>
<div class="group-body">
<h3>选项</h3>
<div class="choices">
<button aria-label="内侧"><svg viewBox="0 0 20 20"><path d="M5 1h3v13l-3-3z" fill="#77705c" stroke="#dbe62d"/><path d="M8 1h6v7l-6 6z" fill="#858268" stroke="#dbe62d"/><path d="M13 7.500h7M11 12.500h9M10 12l3-4M10 17.500h10" fill="none" stroke="#111"/></svg></button>
<button aria-label="外侧"><svg viewBox="0 0 20 20"><path d="M3 2v12l4 5V4zM7 2h5v8l-5 6" fill="#b9cbe2" stroke="#78818c"/><path d="M8 18v-5l5-5h7v10z" fill="#777b80"/></svg></button>
</div>
<h3 class="settings">设置</h3>
<label for="setback">退步值:</label>
<input id="setback" value="0.250000">
</div>
</section>
</div>
</aside>
<section class="scene" aria-label="三维视图">
<svg class="part" viewBox="253 111 904 598">
<g fill="#647478" stroke="#182022" stroke-linejoin="round">
<path d="M744 432L1147 378l3 2-124 184-3 2L622 619q-6 0-8-6z" fill="#5d6e72"/>
<path d="M744 432L1147 378 1023 563 617 617z" stroke="#222e31"/>
<path d="M605 573L731 387l39-6q2 0 1 4L743 426q-1 5 2 6L619 618q-4 0-5-4z"/>
<path d="M607 574L733 388M769 384L645 568M605 573l40-6 4 3-41 6M615 612l30-42" fill="none"/>
<path d="M605 573l10 39M608 577l9 34" fill="none"/>
<path d="M743 431L616 616" stroke="#8d9b9f" stroke-width="2"/><path d="M740 429L647 568M742 427L645 569M745 432L619 617" fill="none"/>
</g></svg>
<p class="credit">CAXA论坛 http://top.caxa.com/</p>
<span class="axis">z</span>
</section>
</div>
</section>
</main>
<svg class="marks" viewBox="0 0 1157 709" aria-hidden="true"><g fill="none" stroke="#ec0000">
<circle cx="106" cy="50" r="13.500" stroke-width="3"/><path d="M111 63L71 252M101 266L608 584M603 601L637 552"/>
<path d="M75 246h26v25H75z" stroke-width="3"/><ellipse cx="605" cy="592" rx="11.500" ry="16" stroke-width="3"/>
<path d="M66 248l10 3-8 10zM640 547l-9 6 8 5zM609 587l-9-2 5-8z" fill="#ec0000" stroke="none"/></g></svg>
</body>
</html>
```
FILE: styles.css
```css
* { box-sizing: border-box; }
body {
  margin: 0; height: 100vh; overflow: hidden; position: relative;
  display: flex; flex-direction: column;
  background: #bbcee6; color: #000;
  font: 12px/16px "Liberation Sans", "Noto Sans CJK SC", sans-serif;
}
button { border: 0; padding: 0; background: none; font: inherit; color: inherit; }
svg { display: block; flex: none; }
h2, h3, p { margin: 0; font: inherit; }

/* menu and horizontal toolbars */
.top { border-bottom: 1px solid #7f99bd; flex: none; }
.menu { display: flex; align-items: flex-end; gap: 15px; height: 10px; padding: 0 0 3px 13px; overflow: hidden; }
.menu button { line-height: 16px; color: #1c3157; flex: none; }
.logo { width: 16px; height: 16px; margin-right: -13px; }
.row { display: flex; height: 26px; }
.bar {
  display: flex; align-items: center; height: 25px;
  border-radius: 3px; background: linear-gradient(#f3f8fe, #dce9f8);
  box-shadow: 0 1px #8fa8cb; flex: none;
}
.bar::before {
  content: ""; width: 2px; height: 15px; margin: 0 4px;
  background: repeating-linear-gradient(#8297b5 0 2px, transparent 2px 4px);
}
.bar.flush::before { margin: 0 3px 0 0; }
.gap-4 { margin-left: 4px; }
.gap-8 { margin-left: 8px; }
.gap-10 { margin-left: 10px; }
.gap-12 { margin-left: 12px; }
.gap-30 { margin-left: 30px; }
.tool { width: 22px; height: 22px; display: grid; place-items: center; flex: none; }
.tool svg { width: 16px; height: 16px; fill: #b5b9be; stroke: #7b8087; overflow: visible; }
.tool.deep svg { stroke: #666b72; fill: #b1b5ba; }
.tool.dark svg { stroke: #222; }
.tool.olive svg { stroke: #35352e; fill: #a19e85; }
.tool.active { background: linear-gradient(#fde9a4, #fbd36a); border: 1px solid #c59a3c; border-radius: 2px; }
.sep { width: 1px; height: 14px; margin: 0 4px 0 3px; background: #9fb0c8; flex: none; }
.cap {
  width: 10px; height: 25px; margin-left: 3px; flex: none;
  border-radius: 0 3px 3px 0; background: linear-gradient(#a9bddb, #829dc3);
  display: grid; justify-items: center; align-content: end; padding-bottom: 3px;
}
.cap::after {
  content: ""; width: 7px; height: 7px; background: #fff;
  clip-path: polygon(0 0, 100% 0, 100% 1px, 0 1px, 0 3px, 100% 3px, 50% 100%, 0 3px);
}

/* vertical toolbars */
.work { display: flex; flex: 1; min-height: 0; }
.side {
  display: flex; flex-direction: column; align-items: center; width: 24px; flex: none;
  border-radius: 3px; background: linear-gradient(90deg, #eff6fe, #d8e5f5);
}
.side .tool svg { fill: #c6cad1; }
.side.first { width: 21px; padding-right: 5px; border-right: 1px solid #90a9cc; overflow: hidden; }
.side::before {
  content: ""; width: 14px; height: 2px; margin: 3px 0 4px; flex: none;
  background: repeating-linear-gradient(90deg, #8297b5 0 2px, transparent 2px 4px);
}
.side .sep { width: 14px; height: 1px; margin: 3px 0 4px; }
.side .cap { width: 24px; height: 9px; margin: 3px 0 0; padding: 0 2px 0 0; align-content: center; justify-items: end; border-radius: 0 0 3px 3px; }
.side .cap::after { transform: rotate(-90deg); }
.side-pair { display: flex; flex-direction: column; gap: 2px; padding: 0 1px; border-right: 1px solid #7894bd; overflow: hidden; flex: none; }
.side.grow { flex: 1; }

/* documents */
.docs { flex: 1; min-width: 0; display: flex; flex-direction: column; }
.tabs { position: relative; display: flex; align-items: center; height: 21px; background: #dfeaf8; flex: none; }
.tab-shape { position: absolute; left: 0; top: 0; width: 208px; height: 22px; }
.tab, .tabs .x { position: relative; }
.tab.one { padding-left: 34px; }
.tab.two { padding: 0 15px 0 31px; font-weight: bold; }
.x { width: 9px; height: 9px; }
.x svg { width: 9px; height: 9px; }
.split { display: flex; flex: 1; min-height: 0; }
.panel {
  width: 205px; flex: none; display: flex; flex-direction: column;
  border-right: 2px solid #657386; background: #b0c2da; padding: 0 4px 0 1px;
}
.panel-title { display: flex; align-items: center; gap: 8px; height: 21px; padding: 0 6px 0 2px; color: #43566f; }
.panel-title h2 { flex: 1; white-space: nowrap; }
.panel-body {
  flex: 1; padding: 5px 5px 0 3px; background: #fff;
  border: 1px solid #8ba3c6; border-bottom: 0;
  display: flex; flex-direction: column; gap: 6px;
}
.actions { display: flex; align-items: center; gap: 9px; height: 28px; padding: 0 7px; border: 1px solid #7291c0; background: linear-gradient(90deg, #f7f7f7, #d5e0ef); }
.actions svg { width: 16px; height: 16px; }
.message, .group-head { display: flex; justify-content: space-between; align-items: center; padding: 0 4px 0 7px; font-size: 13px; font-weight: bold; color: #184595; white-space: nowrap; }
.message { height: 19px; border: 1px solid #7291c0; background: linear-gradient(90deg, #f6f9fe, #ccdcf1); }
.message svg, .group-head svg { width: 10px; height: 10px; }
.group { border: 1px solid #7291c0; }
.group-head { width: 100%; height: 18px; background: linear-gradient(90deg, #e6effc, #cadcf5); border-bottom: 1px solid #7291c0; }
.group-body { margin: 1px 2px; padding: 4px 5px 43px 8px; background: #bbcde5; }
.group-body h3 { height: 17px; padding-left: 3px; border-bottom: 1px solid #fff; box-shadow: inset 0 -1px #9aabc4; }
.group-body h3.settings { margin-top: 6px; }
.choices { display: flex; gap: 8px; padding: 9px 0 0 13px; height: 34px; }
.choices button { width: 22px; height: 22px; border: 1px solid #e7eef8; }
.choices svg { width: 20px; height: 20px; }
.group-body label { display: block; margin: 9px 0 4px 15px; }
.group-body input {
  display: block; width: calc(100% - 28px); height: 22px; margin-left: 28px; padding: 0 3px 4px;
  border: 0; border-top: 1px solid #8f9cae; background: #fff; font: inherit;
}

/* three-dimensional view */
.scene { position: relative; flex: 1; min-width: 0; overflow: hidden; background: linear-gradient(#5177a4, #8fa7c8 40%, #dfe6ef 88%, #f0f2f9); border-top: 1px solid #526581; }
.part { position: absolute; left: 0; top: 0; width: 904px; height: 598px; }
.credit { position: absolute; right: 18px; bottom: 7px; font: 14px/20px "Noto Sans", "Noto Sans CJK SC", sans-serif; white-space: nowrap; }
.axis { position: absolute; left: 28px; bottom: -8px; color: #0000a0; }
.marks { position: absolute; left: 0; top: 0; width: 1157px; height: 709px; pointer-events: none; }
```
